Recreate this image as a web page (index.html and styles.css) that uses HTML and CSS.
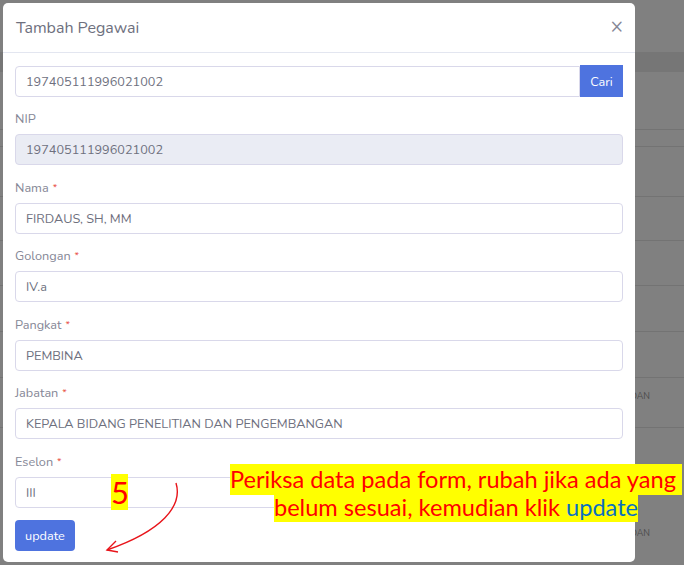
FILE: index.html
```html
<!DOCTYPE html>
<html lang="id">
<head>
<meta charset="utf-8">
<title>Tambah Pegawai</title>
<link rel="stylesheet" href="styles.css">
</head>
<body>
<div class="page">
  <div class="bg">
    <div class="bg-top"></div>
    <div class="bg-head"></div>
    <div class="bg-row r58"></div>
    <div class="bg-row r17"></div>
    <div class="bg-row r50"></div>
    <div class="bg-row r44"></div>
    <div class="bg-row r45"></div>
    <div class="bg-row r46"></div>
    <div class="bg-row r46"></div>
    <div class="bg-row r50 txt"><span>DAN</span></div>
    <div class="bg-row r137 txt2"><span>DAN</span></div>
  </div>

  <div class="modal">
    <div class="modal-header">
      <h5 class="modal-title">Tambah Pegawai</h5>
      <span class="close">&times;</span>
    </div>
    <div class="modal-body">
      <div class="search-group">
        <div class="control search-input">197405111996021002</div>
        <button class="btn btn-cari">Cari</button>
      </div>
      <div class="form-group">
        <label class="lbl">NIP</label>
        <div class="control readonly">197405111996021002</div>
      </div>
      <div class="form-group">
        <label class="lbl">Nama <span class="req">*</span></label>
        <div class="control">FIRDAUS, SH, MM</div>
      </div>
      <div class="form-group">
        <label class="lbl">Golongan <span class="req">*</span></label>
        <div class="control">IV.a</div>
      </div>
      <div class="form-group">
        <label class="lbl">Pangkat <span class="req">*</span></label>
        <div class="control">PEMBINA</div>
      </div>
      <div class="form-group">
        <label class="lbl">Jabatan <span class="req">*</span></label>
        <div class="control">KEPALA BIDANG PENELITIAN DAN PENGEMBANGAN</div>
      </div>
      <div class="form-group">
        <label class="lbl">Eselon <span class="req">*</span></label>
        <div class="control">III</div>
      </div>
      <button class="btn btn-update">update</button>
    </div>
  </div>

  <div class="step-num">5</div>
  <svg class="arrow" width="684" height="565" viewBox="0 0 684 565">
    <path d="M176 483 C183 506, 162 531, 107 550" fill="none" stroke="#e8141a" stroke-width="1.4"/>
    <path d="M116 541 L107 550 L118 552" fill="none" stroke="#e8141a" stroke-width="1.4"/>
  </svg>
  <div class="note">
    <span class="note-line l1">Periksa data pada form, rubah jika ada yang&nbsp;</span>
    <span class="note-line l2">belum sesuai, kemudian klik <span class="kw">update</span></span>
  </div>
</div>
</body>
</html>
```

FILE: styles.css
```css
* { box-sizing: border-box; }
html, body { margin: 0; padding: 0; }
body {
  width: 684px;
  height: 565px;
  overflow: hidden;
  font-family: "Nunito", "Open Sans", "Noto Sans", sans-serif;
}
.page {
  position: relative;
  width: 684px;
  height: 565px;
  background: #808080;
  overflow: hidden;
}
.bg { display: flex; flex-direction: column; }
.bg-top { height: 52px; }
.bg-head { height: 20px; background: #767676; }
.bg-row { border-bottom: 1px solid #737373; flex-shrink: 0; }
.r58 { height: 58px; }
.r17 { height: 17px; }
.r50 { height: 50px; }
.r44 { height: 44px; }
.r45 { height: 45px; }
.r46 { height: 46px; }
.r137 { height: 137px; border-bottom: none; }
.txt, .txt2 {
  display: flex;
  justify-content: flex-end;
  align-items: flex-start;
  padding-right: 34px;
  font-size: 9px;
  line-height: 12px;
  color: #4a4a4a;
}
.txt span { margin-top: 12px; }
.txt2 span { margin-top: 99px; }

.modal {
  position: absolute;
  left: 3px;
  top: 3px;
  width: 632px;
  height: 559px;
  background: #fff;
  border-radius: 5px;
  display: flex;
  flex-direction: column;
}
.modal-header {
  height: 50px;
  border-bottom: 1px solid #e3e6f0;
  display: flex;
  align-items: center;
  justify-content: space-between;
  padding: 0 12px 0 13px;
}
.modal-title {
  margin: 0;
  font-size: 16px;
  font-weight: 400;
  color: #6e707e;
}
.close {
  font-size: 21px;
  color: #858796;
  line-height: 1;
  margin-top: -2px;
}
.modal-body {
  padding: 13px 12px 0 12px;
  display: flex;
  flex-direction: column;
}
.control {
  height: 31px;
  border: 1px solid #d9d8ea;
  border-radius: 4px;
  padding: 0 10px;
  display: flex;
  align-items: center;
  font-size: 12.7px;
  color: #6e707e;
  background: #fff;
}
.readonly { background: #eaecf4; }
.search-group { display: flex; margin-bottom: 12.4px; }
.search-input {
  flex: 1;
  border-radius: 4px 0 0 4px;
}
.btn {
  border: none;
  font-family: inherit;
  color: #fff;
  background: #4e73df;
  font-size: 12.7px;
  cursor: pointer;
}
.btn-cari {
  width: 43px;
  height: 32px;
  margin-top: -1px;
  border-radius: 0;
  padding: 0;
}
.form-group { display: flex; flex-direction: column; margin-bottom: 12.5px; }
.lbl {
  display: flex;
  align-items: center;
  gap: 4px;
  height: 19px;
  font-size: 12.7px;
  line-height: 19px;
  color: #858796;
  margin-bottom: 6px;
}
.req { color: #e74a3b; font-size: 10px; line-height: 10px; margin-top: 1px; }
.btn-update {
  align-self: flex-start;
  width: 60px;
  height: 31px;
  border-radius: 4px;
  padding: 0;
}

.step-num {
  position: absolute;
  left: 111px;
  top: 474px;
  width: 17px;
  height: 36px;
  background: #ffff00;
  color: #ff0000;
  font-family: "Lato", "Liberation Sans", sans-serif;
  font-size: 31px;
  line-height: 36px;
  text-align: center;
}
.arrow { position: absolute; left: 0; top: 0; pointer-events: none; }
.note {
  position: absolute;
  left: 226px;
  top: 464px;
  width: 460px;
  display: flex;
  flex-direction: column;
  align-items: center;
  font-family: "Lato", "Liberation Sans", sans-serif;
  font-size: 23.6px;
  color: #ff0000;
}
.note-line {
  display: block;
  background: #ffff00;
  white-space: nowrap;
}
.l1 { height: 31px; line-height: 31px; }
.l2 { height: 27px; line-height: 25px; }
.kw { color: #0a70c0; }
```
